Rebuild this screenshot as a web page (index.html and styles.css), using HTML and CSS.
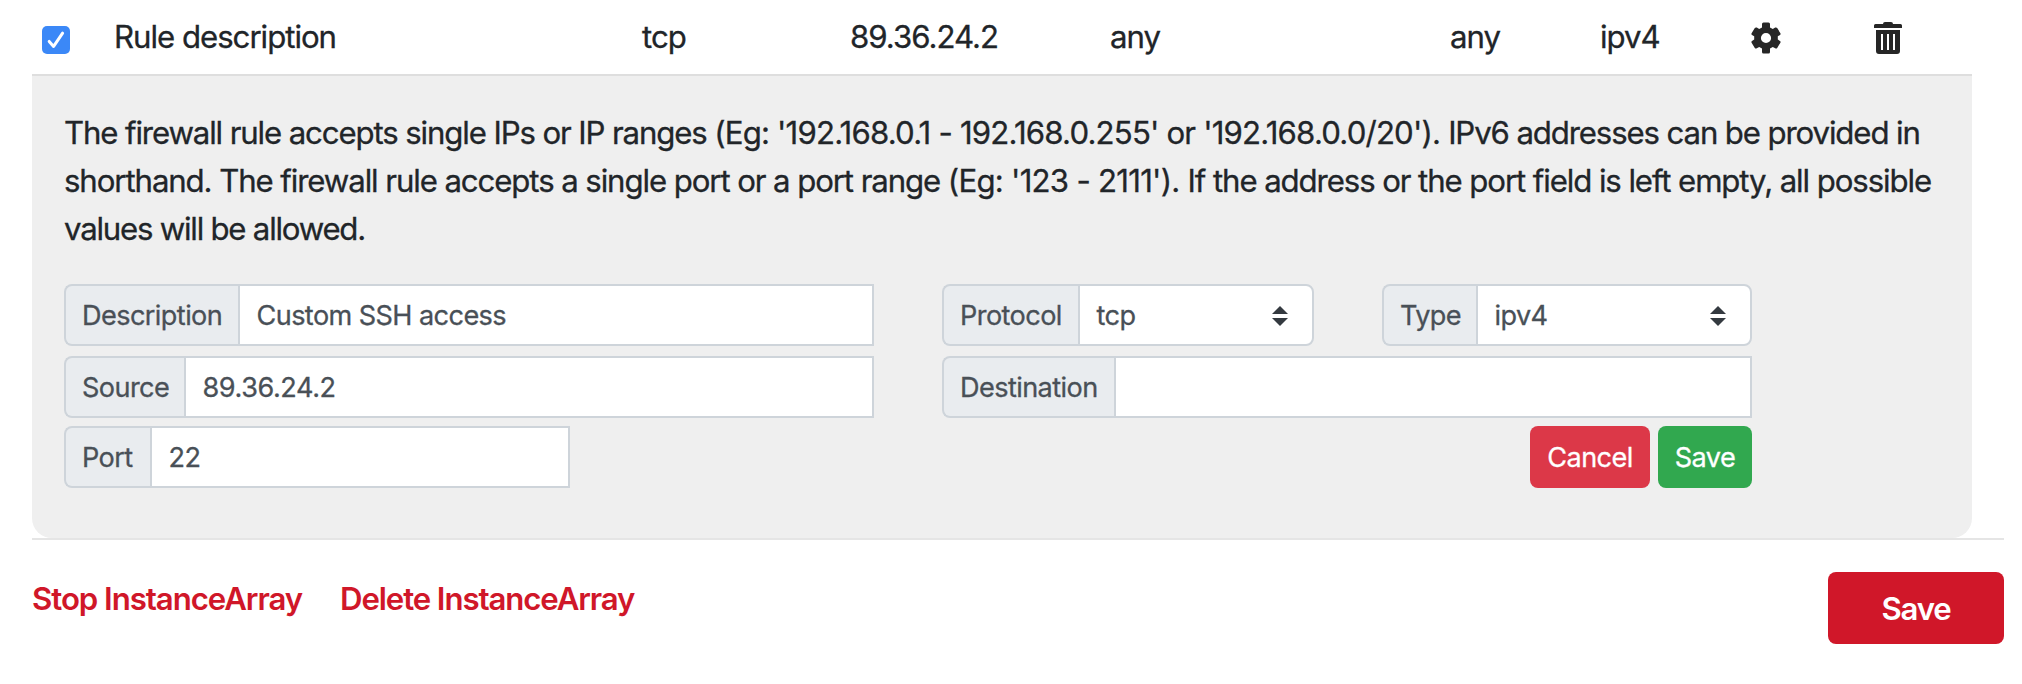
FILE: index.html
```html
<!DOCTYPE html>
<html lang="en">
<head>
<meta charset="utf-8">
<title>Firewall rules</title>
<link rel="stylesheet" href="styles.css">
</head>
<body>
<main class="page">
  <div class="rule-row">
    <span class="check"><svg viewBox="0 0 28 28" width="28" height="28"><path d="M7.200 15.400 11.600 20.400 20.600 7.200" fill="none" stroke="#fff" stroke-width="3" stroke-linecap="round" stroke-linejoin="round"/></svg></span>
    <span class="cell name">Rule description</span>
    <span class="cell">tcp</span>
    <span class="cell ip">89.36.24.2</span>
    <span class="cell">any</span>
    <span class="cell">any</span>
    <span class="cell">ipv4</span>
    <svg class="icon" viewBox="0 0 30 32" width="30" height="32"><path fill="#262626" fill-rule="evenodd" d="M11 2Q11 .5 12.500 .5H17.500Q19 .5 19 2V5.400L21.800 7L24.200 5.600Q25.400 5 26.200 6.100L29.400 11.200Q30 12.300 29 13L26.800 14.300V17.500L29 18.900Q30 19.600 29.400 20.700L26.200 25.900Q25.400 27 24.200 26.300L21.800 25L19 26.600V30Q19 31.500 17.500 31.500H12.500Q11 31.500 11 30V26.600L8.200 25L5.800 26.300Q4.600 27 3.800 25.900L.6 20.700Q0 19.600 1 18.900L3.200 17.500V14.300L1 13Q0 12.300 .6 11.200L3.800 6.100Q4.600 5 5.800 5.600L8.200 7L11 5.400ZM15 10.900A5.100 5.100 0 1 0 15 21.100A5.100 5.100 0 1 0 15 10.900Z"/></svg>
    <svg class="icon" viewBox="0 0 28 32" width="28" height="32"><path fill="#262626" fill-rule="evenodd" d="M0 6V3.500Q0 2 1.500 2H9Q9 0 11 0H17Q19 0 19 2H26.500Q28 2 28 3.500V6ZM2 8H26V29Q26 32 23 32H5Q2 32 2 29ZM7 12V28H9V12ZM13 12V28H15V12ZM19 12V28H21V12Z"/></svg>
  </div>

  <section class="panel">
    <p class="help"><span class="line l1">The firewall rule accepts single IPs or IP ranges <span class="example">(Eg: '192.168.0.1 - 192.168.0.255' or '192.168.0.0/20'). </span>IPv6 addresses can be provided in</span> <span class="line l2">shorthand. The firewall rule accepts a single port or a port range <span class="example">(Eg: '123 - 2111'). </span>If the address or the port field is left empty, all possible</span> <span class="line l3">values will be allowed.</span></p>
    <form class="form">
      <div class="group description"><span class="label">Description</span><span class="control">Custom SSH access</span></div>
      <div class="group select protocol"><span class="label">Protocol</span><span class="control">tcp<svg class="arrows" viewBox="0 0 16 20" width="16" height="20"><path fill="#343a40" d="M0 8 8 0 16 8ZM0 12 8 20 16 12Z"/></svg></span></div>
      <div class="group select type"><span class="label">Type</span><span class="control">ipv4<svg class="arrows" viewBox="0 0 16 20" width="16" height="20"><path fill="#343a40" d="M0 8 8 0 16 8ZM0 12 8 20 16 12Z"/></svg></span></div>
      <div class="group source"><span class="label">Source</span><span class="control">89.36.24.2</span></div>
      <div class="group destination"><span class="label">Destination</span><span class="control"></span></div>
      <div class="group port"><span class="label">Port</span><span class="control">22</span></div>
      <div class="actions"><button type="button" class="btn cancel">Cancel</button><button type="button" class="btn save">Save</button></div>
    </form>
  </section>

  <footer class="footer">
    <a class="link stop">Stop InstanceArray</a>
    <a class="link delete">Delete InstanceArray</a>
    <button type="button" class="submit">Save</button>
  </footer>
</main>
</body>
</html>
```
FILE: styles.css
```css
* { box-sizing: border-box; }
body {
  margin: 0;
  background: #fff;
  color: #212529;
  font-family: Inter, "Liberation Sans", sans-serif;
  font-size: 31.2px;
  line-height: 48px;
  letter-spacing: -1.02px;
  -webkit-text-stroke: 0.3px currentColor;
}
.page { padding: 0 18px 0 32px; }
svg { display: block; }

.rule-row {
  width: 1940px;
  height: 76px;
  padding: 13px 0 0 10px;
  border-bottom: 2px solid #dedede;
  display: grid;
  grid-template-columns: 72px 528px 208px 260px 340px 150px 151px 123px 28px;
  align-items: start;
  white-space: nowrap;
}
.check {
  width: 28px;
  height: 28px;
  margin-top: 13px;
  border-radius: 5px;
  background: #3b88f7;
}
.icon { margin-top: 9px; }

.panel {
  width: 1940px;
  height: 462px;
  padding: 33px 32px 0;
  background: #efefef;
  border-radius: 0 0 20px 20px;
}
.help { margin: 0; white-space: nowrap; }
.line { display: block; }
.l1 { letter-spacing: -1.13px; }
.l2 { letter-spacing: -1.1px; }
.l3 { letter-spacing: -1.23px; }
.l1 .example { letter-spacing: -0.83px; }
.l2 .example { letter-spacing: -0.75px; }
.form {
  margin-top: 31px;
  width: 1688px;
  display: grid;
  grid-template-columns: 506px 304px 68px 372px 68px 370px;
  grid-template-rows: 62px 62px 62px;
  row-gap: 10px;
  font-size: 27.1px;
  letter-spacing: -0.58px;
  color: #495057;
}
.group { display: flex; height: 62px; line-height: 58px; }
.label {
  flex: none;
  padding: 1px 0 0 16px;
  border: 2px solid #ced4da;
  border-right: 0;
  border-radius: 8px 0 0 8px;
  background: #e9ecef;
}
.control {
  flex: 1;
  display: flex;
  align-items: center;
  justify-content: space-between;
  padding: 1px 0 0 16.5px;
  border: 2px solid #ced4da;
  background: #fff;
}
.select .control { padding-right: 24px; border-radius: 0 8px 8px 0; }
.description { grid-area: 1 / 1 / 2 / 3; }
.protocol { grid-area: 1 / 4; }
.type { grid-area: 1 / 6; }
.source { grid-area: 2 / 1 / 3 / 3; }
.source .control { letter-spacing: -0.42px; }
.destination { grid-area: 2 / 4 / 3 / 7; }
.port { grid-area: 3 / 1; margin-top: -2px; }
.description .label { width: 174px; }
.source .label { width: 120px; }
.port .label { width: 86px; }
.protocol .label { width: 136px; }
.type .label { width: 94px; }
.destination .label { width: 172px; }
.actions {
  grid-area: 3 / 4 / 4 / 7;
  margin-top: -2px;
  display: flex;
  justify-content: flex-end;
  gap: 8px;
}
.btn, .submit {
  border: 0;
  padding: 1px 0 0;
  border-radius: 8px;
  color: #fff;
  font: inherit;
  letter-spacing: inherit;
}
.btn { height: 62px; }
.cancel { width: 120px; background: #dc3848; }
.save { width: 94px; background: #31a84f; }

.footer {
  height: 146px;
  border-top: 2px solid #e5e5e5;
  padding-top: 32px;
  display: flex;
  align-items: flex-start;
}
.link {
  margin-top: 3px;
  color: #d01729;
  font-weight: 600;
  letter-spacing: -1.1px;
  -webkit-text-stroke: 0;
}
.stop { width: 308px; letter-spacing: -1.05px; }
.submit {
  width: 176px;
  height: 72px;
  margin-left: auto;
  background: #d01729;
  font-weight: 600;
  letter-spacing: -1.2px;
  -webkit-text-stroke: 0;
}
```
